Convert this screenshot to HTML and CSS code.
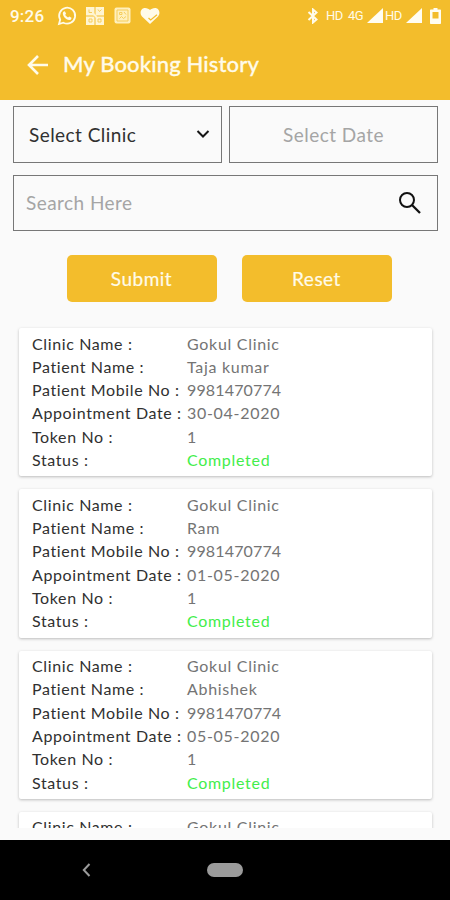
FILE: index.html
```html
<!DOCTYPE html>
<html lang="en">
<head>
  <meta charset="UTF-8" />
  <meta name="viewport" content="width=device-width, initial-scale=1.0"/>
  <title>My Booking History</title>
  <link rel="stylesheet" href="styles.css">
</head>
<body>
  <header class="header">
    <div class="status-bar">
      <span class="time">9:26</span>
      <svg class="icon-whatsapp" width="20" height="20" viewBox="0 0 20 20" fill="none" stroke="#fffbe9">
        <path d="M2 18l1.2-4.4a8 8 0 1 1 3.2 3.1z" stroke-width="1.8"/>
        <path d="M6.5 5.8l1.4-.5 1.2 2.4-.9 1.1c.7 1.3 1.6 2.1 2.9 2.7l1.1-1 2.3 1.2c0 1.5-1 2.5-2.4 2.4C8.8 13.8 6 10.5 5.8 7.6c0-.8.2-1.3.7-1.8z" fill="#fffbe9" stroke="none"/>
      </svg>
      <svg class="icon-grid" width="20" height="20" viewBox="0 0 20 20">
        <path d="M1 1h8.5v8.5H1zM10.500 1H19v8.500h-8.500zM1 10.500h8.500V19H1zM10.500 10.500H19V19h-8.500z" fill="#fff5d2"/>
        <path d="M4 3.500v3h3M13 3.500l1.500 2 2-2M4 13h3v3H4zM13 13h3v3h-3z" fill="none" stroke="#f6cd5d" stroke-width="1"/>
        <path d="M8.500 8l3 3" fill="none" stroke="#fff5d2" stroke-width="2"/>
      </svg>
      <svg class="icon-app" width="17" height="17" viewBox="0 0 17 17">
        <rect x=".5" y=".5" width="16" height="16" rx="2" fill="#fff0bd"/>
        <path d="M3 3h11v11H3zM5.500 5.500h2.500v2H5.500zM10 5l2 2.500M5.500 11.500l2-2 2 2 2.500-2" fill="none" stroke="#f6cd5d"/>
      </svg>
      <svg class="icon-heart" width="20" height="18" viewBox="0 0 20 18">
        <path d="M10 17L2 9.500C-.8 6.500.7 1 5 1c2.300 0 4 1 5 2C11 2 12.800 1 15 1c4.300 0 5.800 5.500 3 8.500z" fill="#fffbe9"/>
        <path d="M8.500 11l2.200 2L17 7.800" fill="none" stroke="#f3bd2c" stroke-width="1.200"/>
      </svg>
      <svg class="icon-bluetooth" width="12" height="16" viewBox="0 0 12 16">
        <path d="M1.500 4l8 7.500L6 14.500v-13l3.500 3-8 7.500" fill="none" stroke="#fffbe9" stroke-width="2"/>
      </svg>
      <span class="network net-hd">HD</span>
      <span class="network net-4g">4G</span>
      <svg class="signal" width="16" height="15" viewBox="0 0 16 15"><path d="M16 0v15H0z" fill="#fffdf2"/></svg>
      <span class="network net-hd2">HD</span>
      <svg class="signal" width="16" height="15" viewBox="0 0 16 15"><path d="M16 0v15H0z" fill="#fffdf2"/></svg>
      <svg class="battery" width="11" height="16" viewBox="0 0 11 16">
        <path d="M3.500 0h4v1.500H10c.6 0 1 .4 1 1V15c0 .6-.4 1-1 1H1c-.6 0-1-.4-1-1V2.500c0-.6.400-1 1-1h2.500zM2.500 4v6.500h6V4z" fill="#fffdf2" fill-rule="evenodd"/>
      </svg>
    </div>
    <div class="title-bar">
      <svg class="back" width="22" height="20" viewBox="0 0 22 20">
        <path d="M21 10H2.500M11 1L2 10l9 9" fill="none" stroke="#fffbe9" stroke-width="2.600"/>
      </svg>
      <h1 class="title">My Booking History</h1>
    </div>
  </header>

  <main class="content">
    <div class="filters">
      <div class="field field-clinic">
        <span>Select Clinic</span>
        <svg width="14" height="9" viewBox="0 0 14 9"><path d="M1.500 1L7 6.500 12.500 1" fill="none" stroke="#161616" stroke-width="2"/></svg>
      </div>
      <div class="field field-date"><span>Select Date</span></div>
    </div>
    <div class="field field-search">
      <span>Search Here</span>
      <svg width="24" height="24" viewBox="0 0 24 24" fill="none" stroke="#111">
        <circle cx="9" cy="9" r="7" stroke-width="2"/>
        <path d="M14 14l8 8" stroke-width="2.300"/>
      </svg>
    </div>
    <div class="buttons">
      <button class="btn">Submit</button>
      <button class="btn">Reset</button>
    </div>

    <div class="booking-list">
      <div class="card">
        <div class="row"><span class="label">Clinic Name :</span><span class="value">Gokul Clinic</span></div>
        <div class="row"><span class="label">Patient Name :</span><span class="value">Taja kumar</span></div>
        <div class="row"><span class="label">Patient Mobile No :</span><span class="value mobile">9981470774</span></div>
        <div class="row"><span class="label">Appointment Date :</span><span class="value">30-04-2020</span></div>
        <div class="row"><span class="label">Token No :</span><span class="value">1</span></div>
        <div class="row"><span class="label">Status :</span><span class="value completed">Completed</span></div>
      </div>
      <div class="card">
        <div class="row"><span class="label">Clinic Name :</span><span class="value">Gokul Clinic</span></div>
        <div class="row"><span class="label">Patient Name :</span><span class="value">Ram</span></div>
        <div class="row"><span class="label">Patient Mobile No :</span><span class="value mobile">9981470774</span></div>
        <div class="row"><span class="label">Appointment Date :</span><span class="value">01-05-2020</span></div>
        <div class="row"><span class="label">Token No :</span><span class="value">1</span></div>
        <div class="row"><span class="label">Status :</span><span class="value completed">Completed</span></div>
      </div>
      <div class="card">
        <div class="row"><span class="label">Clinic Name :</span><span class="value">Gokul Clinic</span></div>
        <div class="row"><span class="label">Patient Name :</span><span class="value">Abhishek</span></div>
        <div class="row"><span class="label">Patient Mobile No :</span><span class="value mobile">9981470774</span></div>
        <div class="row"><span class="label">Appointment Date :</span><span class="value">05-05-2020</span></div>
        <div class="row"><span class="label">Token No :</span><span class="value">1</span></div>
        <div class="row"><span class="label">Status :</span><span class="value completed">Completed</span></div>
      </div>
      <div class="card">
        <div class="row"><span class="label">Clinic Name :</span><span class="value">Gokul Clinic</span></div>
      </div>
    </div>
  </main>

  <nav class="nav-bar">
    <svg class="nav-back" width="9" height="14" viewBox="0 0 9 14"><path d="M7.500 1L1.800 7l5.700 6" fill="none" stroke="#9b9b9b" stroke-width="2"/></svg>
    <div class="nav-home"></div>
  </nav>
</body>
</html>
```

FILE: styles.css
```css
* {
  box-sizing: border-box;
}

body {
  margin: 0;
  height: 900px;
  display: flex;
  flex-direction: column;
  overflow: hidden;
  background-color: #fafafa;
  font-family: Lato, "Open Sans", sans-serif;
}

svg {
  display: block;
  flex-shrink: 0;
}

.header {
  height: 100px;
  flex-shrink: 0;
  background-color: #f3bd2c;
  color: #fffbe9;
}

.status-bar {
  display: flex;
  align-items: center;
  height: 31px;
  padding: 0 9px 0 10px;
}

.time {
  width: 47px;
  font-family: Roboto, sans-serif;
  font-size: 17px;
  font-weight: 500;
  letter-spacing: 0.2px;
}

.icon-grid {
  margin-left: 8px;
}

.icon-app {
  margin-left: 9px;
}

.icon-heart {
  margin-left: 9px;
}

.icon-bluetooth {
  margin-left: auto;
}

.network {
  font-family: Roboto, sans-serif;
  font-size: 13px;
  letter-spacing: -0.5px;
  white-space: nowrap;
}

.net-hd {
  width: 22px;
  margin-left: 7px;
}

.net-4g {
  width: 19px;
}

.net-hd2 {
  width: 21px;
  margin-left: 2px;
}

.battery {
  margin-left: 8px;
}

.title-bar {
  display: flex;
  align-items: center;
  height: 69px;
  padding: 0 0 1px 27px;
}

.title {
  margin: 0 0 2px 14px;
  font-size: 22px;
  font-weight: 500;
  line-height: 30px;
  letter-spacing: 0.15px;
  white-space: nowrap;
  -webkit-text-stroke: 0.3px #fffbe9;
}

.content {
  flex: 1;
  min-height: 0;
  display: flex;
  flex-direction: column;
  padding: 6px 12px 12px 13px;
}

.filters {
  display: grid;
  grid-template-columns: 209px 209px;
  gap: 7px;
}

.field {
  display: flex;
  align-items: center;
  height: 57px;
  padding-bottom: 1px;
  border: 1px solid #777;
  font-size: 19px;
  letter-spacing: 0.45px;
  white-space: nowrap;
}

.field-clinic {
  justify-content: space-between;
  padding-left: 15px;
  padding-right: 11px;
  color: #303030;
}

.field-date {
  justify-content: center;
  color: #a5a5a5;
}

.field-search {
  justify-content: space-between;
  flex-shrink: 0;
  height: 56px;
  margin-top: 12px;
  padding-left: 12px;
  padding-right: 15px;
  color: #a5a5a5;
}

.buttons {
  display: flex;
  justify-content: center;
  gap: 25px;
  margin: 24px 0 17px;
  padding-left: 7px;
}

.btn {
  width: 150px;
  height: 47px;
  padding: 0;
  border: none;
  border-radius: 5px;
  background-color: #f3bd2c;
  color: #fffbe9;
  font-family: inherit;
  font-size: 19px;
  letter-spacing: 0.5px;
  -webkit-text-stroke: 0.2px #fffbe9;
}

.booking-list {
  flex: 1;
  min-height: 0;
  overflow: hidden;
  padding: 9px 6px 0;
}

.card {
  height: 148.3px;
  margin-bottom: 13px;
  padding: 3.5px 13px;
  border-radius: 2px;
  background-color: #fff;
  box-shadow: 0 1px 3px rgba(0, 0, 0, 0.25);
}

.row {
  display: flex;
  height: 23.3px;
  line-height: 23.3px;
  font-size: 16px;
  white-space: nowrap;
}

.label {
  width: 155px;
  color: #303030;
  letter-spacing: 0.62px;
}

.value {
  color: #747474;
  letter-spacing: 0.7px;
}

.mobile {
  letter-spacing: 0.15px;
}

.completed {
  color: #42ee4b;
}

.nav-bar {
  display: grid;
  grid-template-columns: 1fr 36px 1fr;
  align-items: center;
  height: 60px;
  flex-shrink: 0;
  background-color: #000;
}

.nav-back {
  margin-left: 82px;
}

.nav-home {
  height: 14px;
  border-radius: 7px;
  background-color: #9b9b9b;
}
```
